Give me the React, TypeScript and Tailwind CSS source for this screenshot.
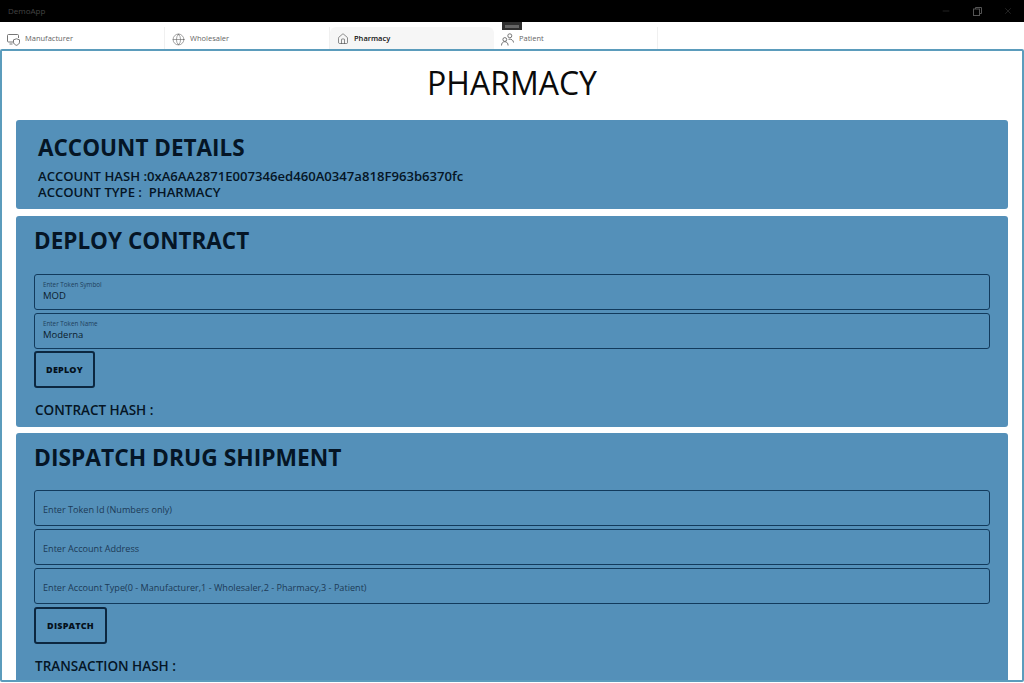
import { Globe, Home, Minus, X } from "lucide-react";
import type { ReactNode } from "react";

const font = { fontFamily: '"Open Sans", "Noto Sans", sans-serif' };

function Tab({
  icon,
  label,
  active,
  divider,
  width = "w-[165px]",
}: {
  icon: ReactNode;
  label: string;
  active?: boolean;
  divider?: boolean;
  width?: string;
}) {
  return (
    <div
      className={`flex h-[22px] items-center gap-[5px] pl-[7px] pt-[2px] ${width} ${
        active ? "rounded-t-md bg-[#f6f6f6] font-semibold text-[#111]" : "text-[#666]"
      } ${divider ? "border-r border-[#f0f0f0]" : ""}`}
    >
      {icon}
      <span className="text-[7.5px]">{label}</span>
    </div>
  );
}

function MonitorShield() {
  return (
    <svg width="13" height="13" viewBox="0 0 13 13" fill="none" stroke="#666" strokeWidth="0.9">
      <path d="M6 9H1.500a1 1 0 0 1-1-1V2.500a1 1 0 0 1 1-1h9a1 1 0 0 1 1 1V5" />
      <path d="M2.500 11h3" />
      <path d="M9.500 5.800l3 1v2.400c0 1.500-1.300 2.500-3 3.100-1.700-.6-3-1.600-3-3.100V6.800z" />
    </svg>
  );
}

function People() {
  return (
    <svg width="13" height="13" viewBox="0 0 13 13" fill="none" stroke="#666" strokeWidth="0.9">
      <circle cx="8.800" cy="2.800" r="2" />
      <path d="M7.500 6.300c2.600-.6 5 .8 5 3.200" />
      <circle cx="3.800" cy="6.500" r="1.900" />
      <path d="M.5 12.500c0-2.400 1.400-3.800 3.300-3.800s3.300 1.400 3.300 3.800" />
    </svg>
  );
}

function Field({ label, value, placeholder }: { label?: string; value?: string; placeholder?: string }) {
  return (
    <div className="flex h-[36px] w-full flex-col justify-center rounded-[3px] border border-[#123a5c] px-2">
      {label && <span className="text-[6.3px] leading-[8px] text-[#1f3f5c]">{label}</span>}
      {value && <span className="text-[9.5px] leading-[14px] text-[#0c1c2c]">{value}</span>}
      {placeholder && <span className="pt-[3px] text-[9.1px] text-[#1c3a56]">{placeholder}</span>}
    </div>
  );
}

function ActionButton({ children, width }: { children: ReactNode; width: string }) {
  return (
    <button
      className={`flex h-[37px] items-center justify-center rounded-[3px] border-2 border-[#0c2740] text-[9px] font-extrabold tracking-[0.2px] text-[#04101c] ${width}`}
    >
      {children}
    </button>
  );
}

export default function App() {
  return (
    <div className="flex h-[683px] w-[1024px] flex-col overflow-hidden bg-white" style={font}>
      {/* title bar */}
      <div className="flex h-[22px] shrink-0 items-center justify-between bg-black pl-[8px] pr-[11px]">
        <span className="text-[8px] text-[#444]">DemoApp</span>
        <div className="flex items-center gap-[21.5px] text-[#555]">
          <Minus size={10} strokeWidth={1} />
          <svg width="9" height="9" viewBox="0 0 9 9" fill="none" stroke="currentColor" strokeWidth="1">
            <rect x="0.5" y="2" width="6" height="6.500" />
            <path d="M2.500 2V0.500H8.500V6.500H6.500" />
          </svg>
          <X size={10} strokeWidth={1} />
        </div>
      </div>

      {/* tabs */}
      <div className="relative flex h-[27px] shrink-0 items-end bg-white">
        <Tab divider label="Manufacturer" icon={<MonitorShield />} />
        <Tab divider label="Wholesaler" icon={<Globe size={13} strokeWidth={1} color="#555" />} />
        <Tab active width="w-[164px]" label="Pharmacy" icon={<Home size={12} strokeWidth={1.2} color="#444" />} />
        <Tab divider width="w-[164px]" label="Patient" icon={<People />} />
        <div className="absolute left-[502px] top-0 flex h-[8px] w-[20px] items-center justify-center bg-[#2f2f2f]">
          <div className="h-[3px] w-[14px] bg-[#666]" />
        </div>
      </div>

      {/* page frame */}
      <div className="mb-[1px] flex h-[633px] flex-col overflow-hidden rounded-[2px] border-2 border-[#5b9cbc] px-[14px]">
        <h1 className="mt-[9px] h-[61px] text-center text-[32px] leading-[46px] text-[#0a0a0a]">PHARMACY</h1>

        <section className="flex h-[89px] shrink-0 flex-col rounded-[3px] bg-[#5490b9] pl-[22px] pt-[13px] text-[#051525]">
          <h2 className="text-[22.5px] font-bold leading-[30px]">ACCOUNT DETAILS</h2>
          <p className="mt-[5px] text-[13.12px] font-semibold leading-[16px]">
            ACCOUNT HASH :0xA6AA2871E007346ed460A0347a818F963b6370fc
          </p>
          <p className="text-[13.12px] font-semibold leading-[16px]">ACCOUNT TYPE :&nbsp; PHARMACY</p>
        </section>

        <section className="mt-[7px] flex h-[211px] shrink-0 flex-col rounded-[3px] bg-[#5490b9] px-[18px] pt-[10px] text-[#051525]">
          <h2 className="text-[22.5px] font-bold leading-[30px]">DEPLOY CONTRACT</h2>
          <div className="mt-[18px] flex flex-col gap-[3px]">
            <Field label="Enter Token Symbol" value="MOD" />
            <Field label="Enter Token Name" value="Moderna" />
          </div>
          <div className="mt-[2px]">
            <ActionButton width="w-[61px]">DEPLOY</ActionButton>
          </div>
          <p className="ml-[1px] mt-[13px] text-[13.500px] font-semibold leading-[18px]">CONTRACT HASH :</p>
        </section>

        <section className="mt-[6px] flex h-[247px] shrink-0 flex-col rounded-t-[3px] bg-[#5490b9] px-[18px] pt-[10px] text-[#051525]">
          <h2 className="text-[22.8px] font-bold leading-[30px]">DISPATCH DRUG SHIPMENT</h2>
          <div className="mt-[17px] flex flex-col gap-[3px]">
            <Field placeholder="Enter Token Id (Numbers only)" />
            <Field placeholder="Enter Account Address" />
            <Field placeholder="Enter Account Type(0 - Manufacturer,1 - Wholesaler,2 - Pharmacy,3 - Patient)" />
          </div>
          <div className="mt-[3px]">
            <ActionButton width="w-[73px]">DISPATCH</ActionButton>
          </div>
          <p className="ml-[1px] mt-[13px] text-[13.500px] font-semibold leading-[18px]">TRANSACTION HASH :</p>
        </section>
      </div>
    </div>
  );
}
